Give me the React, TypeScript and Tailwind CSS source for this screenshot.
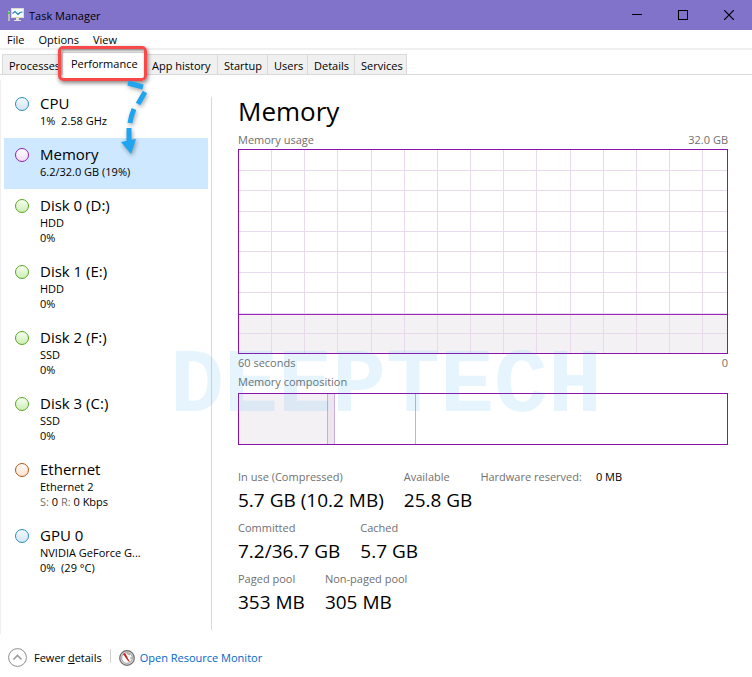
import React, { useState } from "react";
import clsx from "clsx";

interface IResource {
  name: string;
  lines: React.ReactNode[];
  dot: string;
}

const blueDot = "border-[#2a8dbf] from-[#f4f9fd] to-[#d3e5f3]";
const greenDot = "border-[#57a822] from-[#f6fdf1] to-[#cdedb4]";

const resources: IResource[] = [
  { name: "CPU", lines: ["1%  2.58 GHz"], dot: blueDot },
  { name: "Memory", lines: ["6.2/32.0 GB (19%)"], dot: "border-[#8f1fb0] from-[#ffffff] to-[#f0dcf6]" },
  { name: "Disk 0 (D:)", lines: ["HDD", "0%"], dot: greenDot },
  { name: "Disk 1 (E:)", lines: ["HDD", "0%"], dot: greenDot },
  { name: "Disk 2 (F:)", lines: ["SSD", "0%"], dot: greenDot },
  { name: "Disk 3 (C:)", lines: ["SSD", "0%"], dot: greenDot },
  {
    name: "Ethernet",
    lines: [
      "Ethernet 2",
      <>
        <span className="text-[#707070]">S:</span> 0 <span className="text-[#707070]">R:</span> 0 Kbps
      </>,
    ],
    dot: "border-[#a85a1c] from-[#fffaf6] to-[#fbe3d0]",
  },
  { name: "GPU 0", lines: ["NVIDIA GeForce G...", "0%  (29 °C)"], dot: blueDot },
];

const tabs = [
  { name: "Processes", width: "w-[60px]" },
  { name: "Performance", width: "w-[84px]" },
  { name: "App history", width: "w-[72px]" },
  { name: "Startup", width: "w-[50px]" },
  { name: "Users", width: "w-[40px]" },
  { name: "Details", width: "w-[47px]" },
  { name: "Services", width: "w-[52px]" },
];

const stats = [
  [
    { label: "In use (Compressed)", value: "5.7 GB (10.2 MB)" },
    { label: "Available", value: "25.8 GB" },
  ],
  [
    { label: "Committed", value: "7.2/36.7 GB" },
    { label: "Cached", value: "5.7 GB" },
  ],
  [
    { label: "Paged pool", value: "353 MB" },
    { label: "Non-paged pool", value: "305 MB" },
  ],
];

const gridColumns = [33, 66, 99, 133, 166, 199, 232, 265, 298, 332, 365, 398, 431, 464];
const gridRows = [21, 41, 62, 82, 102, 123, 143, 164, 184];

const AppIcon = () => (
  <svg width="16" height="16" viewBox="0 0 16 16" aria-hidden="true">
    <rect x="0" y="4" width="2" height="10" fill="#b9bcb9" />
    <rect x="0" y="5" width="2" height="2" fill="#3fd13a" />
    <rect x="3" y="1" width="13" height="10" fill="#dcd9cf" />
    <rect x="4" y="2" width="11" height="8" fill="#f4fcff" />
    <path d="M4.5 6.5L7 4.5L10 7.5L12 5.5L14.5 5" fill="none" stroke="#1c86b8" strokeWidth="1.1" />
    <path d="M8 11h3v2h2v1H6v-1h2z" fill="#e4e2dc" />
  </svg>
);

const TitleBar = () => (
  <header className="flex h-[30px] items-center bg-[#8073c9] pl-2">
    <AppIcon />
    <h1 className="flex-1 pl-[5px]">Task Manager</h1>
    <button type="button" aria-label="Minimize" className="flex h-full w-[46px] items-center justify-center">
      <svg width="10" height="10" viewBox="0 0 10 10" shapeRendering="crispEdges">
        <path d="M0 4h10v1H0z" />
      </svg>
    </button>
    <button type="button" aria-label="Maximize" className="flex h-full w-[46px] items-center justify-center">
      <svg width="10" height="10" viewBox="0 0 10 10">
        <rect x="0.5" y="0.5" width="9" height="9" fill="none" stroke="#000" />
      </svg>
    </button>
    <button type="button" aria-label="Close" className="flex h-full w-[46px] items-center justify-center">
      <svg width="10" height="10" viewBox="0 0 10 10">
        <path d="M0 0l10 10M10 0L0 10" stroke="#000" strokeWidth="1.2" />
      </svg>
    </button>
  </header>
);

// red frame and dashed arrow pointing from the tab to the memory row
const Callout = () => (
  <>
    <span className="pointer-events-none absolute -top-1.5 -left-1 h-[35px] w-[89px] rounded-[5px] border-3 border-[#f8484a] shadow-[1px_2px_4px_rgba(0,0,0,0.5),inset_1px_2px_3px_rgba(0,0,0,0.4)]" />
    <svg
      className="pointer-events-none absolute top-5 left-12 drop-shadow-[1px_2px_2px_rgba(0,0,0,0.35)]"
      width="50"
      height="90"
      viewBox="110 72 50 90"
      aria-hidden="true"
    >
      <path
        d="M128 83L143 87M145 92L138 104M134 109Q131 116 130 123M129 128V142"
        fill="none"
        stroke="#1fa5ef"
        strokeWidth="5"
      />
      <path d="M121 142L136 139L131 154Z" fill="#1fa5ef" />
    </svg>
  </>
);

const UsageGraph = () => (
  <svg
    className="block h-[205px] w-full"
    viewBox="0 0 490 205"
    preserveAspectRatio="none"
    shapeRendering="crispEdges"
    role="img"
    aria-label="Memory usage"
  >
    <rect x="0" y="165" width="490" height="40" fill="#f4f1f5" />
    {gridColumns.map((x) => (
      <rect key={x} x={x} y="0" width="1" height="205" fill="#e8d9ec" />
    ))}
    {gridRows.map((y) => (
      <rect key={y} x="0" y={y} width="490" height="1" fill="#e8d9ec" />
    ))}
    <rect x="0" y="165" width="490" height="1" fill="#9a28b5" />
    <path d="M0 0h490v205H0zM1 1v203h488V1z" fill="#8b12ae" fillRule="evenodd" />
  </svg>
);

const App = () => {
  const [activeTab, setActiveTab] = useState("Performance");
  const [selected, setSelected] = useState("Memory");

  return (
    <div className="flex min-h-screen flex-col bg-white font-['Open_Sans','Noto_Sans',sans-serif] text-[11px] leading-[15px] text-black">
      <TitleBar />
      <nav className="flex h-5 items-center gap-[14px] border-b-2 border-[#f0f0f0] pl-[7px]">
        <button type="button">File</button>
        <button type="button">Options</button>
        <button type="button">View</button>
      </nav>

      <div role="tablist" className="relative z-10 flex h-[25px] items-end border-b border-[#d9d9d9] pl-0.5">
        {tabs.map((tab) => (
          <div key={tab.name} className={clsx("relative", tab.width, tab.name === activeTab && "z-10")}>
            <button
              type="button"
              role="tab"
              aria-selected={tab.name === activeTab}
              onClick={() => setActiveTab(tab.name)}
              className={clsx(
                "flex w-full border-t border-r border-[#d9d9d9] whitespace-nowrap",
                tab.name === activeTab ? "-mb-px h-[23px] border-l bg-white pt-[3px] pl-2" : "h-5 bg-[#f0f0f0] pt-[3px] pl-1.5",
                tab.name === "Processes" && "border-l"
              )}
            >
              {tab.name}
            </button>
            {tab.name === "Performance" && <Callout />}
          </div>
        ))}
      </div>

      <main className="relative mt-[5px] flex flex-1 border-l border-[#f0f0f0]">
        <aside className="mt-[17px] mb-1 ml-[3px] w-[208px] shrink-0 border-r border-[#d9d9d9] pr-[3px]">
          <ul className="-mt-2.5">
            {resources.map((item) => (
              <li key={item.name}>
                <button
                  type="button"
                  onClick={() => setSelected(item.name)}
                  className={clsx(
                    "flex w-full items-start gap-[11px] pt-1.5 pb-2.5 pl-[11px] text-left",
                    item.name === selected && "bg-[#cde8ff]"
                  )}
                >
                  <span className={clsx("mt-1 size-[14px] shrink-0 rounded-full border bg-linear-to-b", item.dot)} />
                  <span className="flex flex-col">
                    <span className="text-[15px] leading-5">{item.name}</span>
                    {item.lines.map((line, i) => (
                      <span key={i} className="whitespace-pre">
                        {line}
                      </span>
                    ))}
                  </span>
                </button>
              </li>
            ))}
          </ul>
        </aside>

        <section className="flex-1 pt-[11px] pr-6 pl-[26px]">
          <h2 className="mb-px text-[26px] leading-10">Memory</h2>
          <div className="mb-0.5 flex justify-between text-[#707070]">
            <span>Memory usage</span>
            <span>32.0 GB</span>
          </div>
          <UsageGraph />
          <div className="mt-px flex justify-between text-[#707070]">
            <span>60 seconds</span>
            <span>0</span>
          </div>
          <p className="my-1 text-[#707070]">Memory composition</p>
          <div className="flex h-[52px] border border-[#8b12ae]">
            <div className="w-[18%] bg-[#f4f1f5]" />
            <div className="w-2 border-x border-[#c9aed6] bg-[#ede6f1]" />
            <div className="w-[16.6%] border-r border-[#c9aed6]" />
          </div>

          <div className="mt-6 flex flex-col gap-1">
            {stats.map((row, i) => (
              <div key={i} className="flex">
                <dl className="flex gap-5">
                  {row.map((stat) => (
                    <div key={stat.label}>
                      <dt className="text-[#707070]">{stat.label}</dt>
                      <dd className="text-[19px] leading-8">{stat.value}</dd>
                    </div>
                  ))}
                </dl>
                {i === 0 && (
                  <dl className="flex gap-[14px] pl-2">
                    <dt className="text-[#707070]">Hardware reserved:</dt>
                    <dd>0 MB</dd>
                  </dl>
                )}
              </div>
            ))}
          </div>
        </section>

        <span className="pointer-events-none absolute top-[257px] left-[169px] font-['Liberation_Mono',monospace] text-[90px] leading-[100px] font-bold text-[#1fa5ef]/11">
          DEEPTECH
        </span>
      </main>

      <footer className="flex h-[43px] items-center pl-2">
        <button type="button" className="flex items-center gap-[7px] pt-1">
          <svg width="19" height="19" viewBox="0 0 19 19" fill="none" aria-hidden="true">
            <circle cx="9.5" cy="9.5" r="8.9" stroke="#8c8c8c" />
            <path d="M5.5 11.5l4-4 4 4" stroke="#9c9c9c" strokeWidth="1.6" />
          </svg>
          <span>
            Fewer <u>d</u>etails
          </span>
        </button>
        <span className="mx-2 h-[14px] border-l border-[#d0d0d0]" />
        <a href="#resource-monitor" className="flex items-center gap-[5px] pt-1 text-[#0066cc]">
          <svg width="16" height="16" viewBox="0 0 16 16" aria-hidden="true">
            <circle cx="8" cy="8" r="7.3" fill="#d8d8d6" stroke="#6e6a68" strokeWidth="1.2" />
            <circle cx="8" cy="8" r="5.3" fill="#fff" stroke="#96908e" strokeWidth="0.8" />
            <path d="M4 4l2-1 5 9-2-1z" fill="#d01c1c" />
            <path d="M8 3.5l3 1.5M12 7v2" stroke="#777" strokeWidth="0.8" />
          </svg>
          Open Resource Monitor
        </a>
      </footer>
    </div>
  );
};

export default App;
